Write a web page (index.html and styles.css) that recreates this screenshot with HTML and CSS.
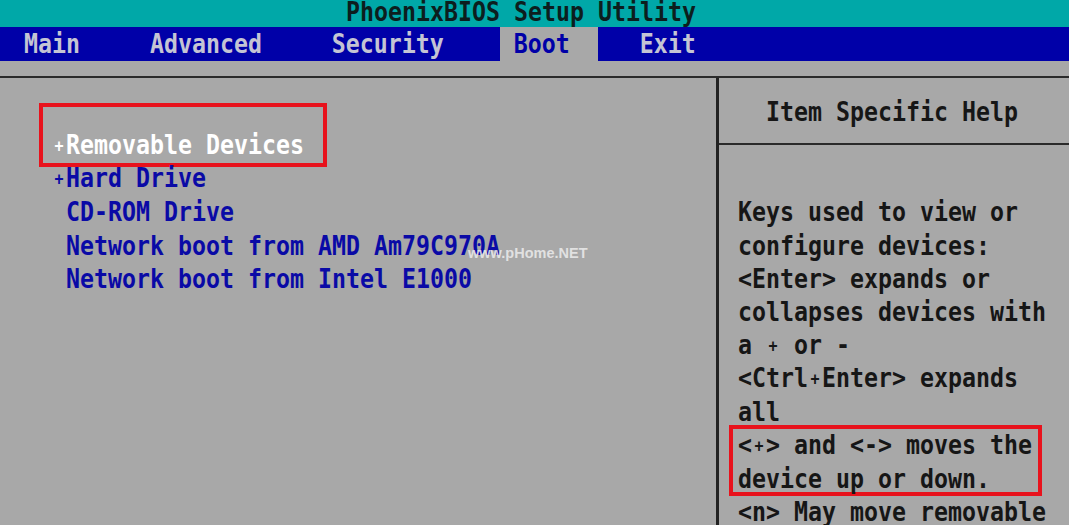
FILE: index.html
```html
<!DOCTYPE html>
<html lang="en">
<head>
  <meta charset="UTF-8">
  <meta name="viewport" content="width=device-width, initial-scale=1.0">
  <title>PhoenixBIOS Setup Utility</title>
  <link rel="stylesheet" href="styles.css">
</head>
<body>
  <div class="screen">
    <!-- title -->
    <div class="title"><span class="t">PhoenixBIOS Setup Utility</span></div>

    <!-- menu bar -->
    <nav class="menu">
      <span class="tab"><span class="t">Main</span></span>
      <span class="tab"><span class="t">Advanced</span></span>
      <span class="tab"><span class="t">Security</span></span>
      <span class="tab active"><span class="t">Boot</span></span>
      <span class="tab"><span class="t">Exit</span></span>
    </nav>

    <div class="frame">
      <!-- boot order -->
      <div class="boot-list">
        <div class="mark mark-boot"></div>
        <div class="row"></div>
        <div class="row item selected"><span class="t"><span class="plus">+</span>Removable Devices</span></div>
        <div class="row item"><span class="t"><span class="plus">+</span>Hard Drive</span></div>
        <div class="row item"><span class="t"><span class="plus"></span>CD-ROM Drive</span></div>
        <div class="row item"><span class="t"><span class="plus"></span>Network boot from AMD Am79C970A</span></div>
        <div class="row item"><span class="t"><span class="plus"></span>Network boot from Intel E1000</span></div>
      </div>

      <!-- help panel -->
      <div class="help">
        <div class="help-head">
          <div class="row"><span class="t">Item Specific Help</span></div>
        </div>
        <div class="help-body">
          <div class="row"><span class="t">Keys used to view or</span></div>
          <div class="row"><span class="t">configure devices:</span></div>
          <div class="row"><span class="t">&lt;Enter&gt; expands or</span></div>
          <div class="row"><span class="t">collapses devices with</span></div>
          <div class="row"><span class="t">a <span class="plus">+</span> or -</span></div>
          <div class="row"><span class="t">&lt;Ctrl<span class="plus">+</span>Enter&gt; expands</span></div>
          <div class="row"><span class="t">all</span></div>
          <div class="marked">
            <div class="mark mark-help"></div>
            <div class="row"><span class="t">&lt;<span class="plus">+</span>&gt; and &lt;-&gt; moves the</span></div>
            <div class="row"><span class="t">device up or down.</span></div>
          </div>
          <div class="row"><span class="t">&lt;n&gt; May move removable</span></div>
        </div>
      </div>
    </div>

    <div class="watermark">www.pHome.NET</div>
  </div>
</body>
</html>
```

FILE: styles.css
```css
/* screen */
body {
  margin: 0;
  padding: 0;
  background-color: #a8a8a8;
  font-family: "DejaVu Sans Mono", "Liberation Mono", monospace;
  font-size: 23.255px;
  font-weight: bold;
  overflow: hidden;
}
.screen {
  position: relative;
  width: 1069px;
  height: 525px;
  overflow: hidden;
}
.t {
  display: inline-block;
  white-space: pre;
  transform: scaleY(1.18);
}
.row {
  height: 33.33px;
  line-height: 33.33px;
  white-space: pre;
}
/* small BIOS plus sign, still one cell wide */
.plus {
  display: inline-block;
  width: 14px;
  text-align: center;
  font-size: 15px;
  vertical-align: 2px;
}

/* title + menu */
.title {
  height: 27px;
  line-height: 24px;
  background-color: #00a8a8;
  color: #0c1e1e;
  padding-left: calc(25ch - 4px);
  white-space: pre;
}
.menu {
  display: flex;
  gap: 2ch;
  height: 34px;
  padding-left: calc(1ch - 4px);
  background-color: #0000a8;
}
.tab {
  height: 34px;
  line-height: 34px;
  padding: 0 2ch 0 1ch;
  color: #c4c4d4;
}
.tab.active {
  background-color: #a8a8a8;
  color: #0000a8;
}

/* frame */
.frame {
  display: flex;
  margin-top: 15px;
  border-top: 2px solid #2a2a2a;
  height: 460px;
}
.boot-list {
  position: relative;
  width: 716px;
  padding-top: 16.4px;
}
.item {
  padding-left: calc(4ch - 4px);
  color: #0a0aa6;
}
.item.selected {
  color: #ffffff;
}
.help {
  flex: 1;
  border-left: 3px solid #222;
  color: #161616;
}
.help-head {
  padding-top: 16.4px;
  padding-bottom: 15px;
  padding-left: 47px;
  border-bottom: 2px solid #2a2a2a;
}
.help-body {
  padding-top: 49.7px;
  padding-left: 19px;
}
.marked {
  position: relative;
}

/* red annotations */
.mark {
  position: absolute;
  border: 4px solid #e8121c;
  box-sizing: border-box;
}
.mark-boot {
  left: 39px;
  top: 25px;
  width: 288px;
  height: 64px;
}
.mark-help {
  left: -9px;
  top: -3px;
  width: 313px;
  height: 71px;
}

.watermark {
  position: absolute;
  left: 468px;
  top: 245px;
  font-family: "Liberation Sans", Arial, sans-serif;
  font-size: 14.5px;
  font-weight: bold;
  color: rgba(236, 236, 236, 0.85);
}
```
